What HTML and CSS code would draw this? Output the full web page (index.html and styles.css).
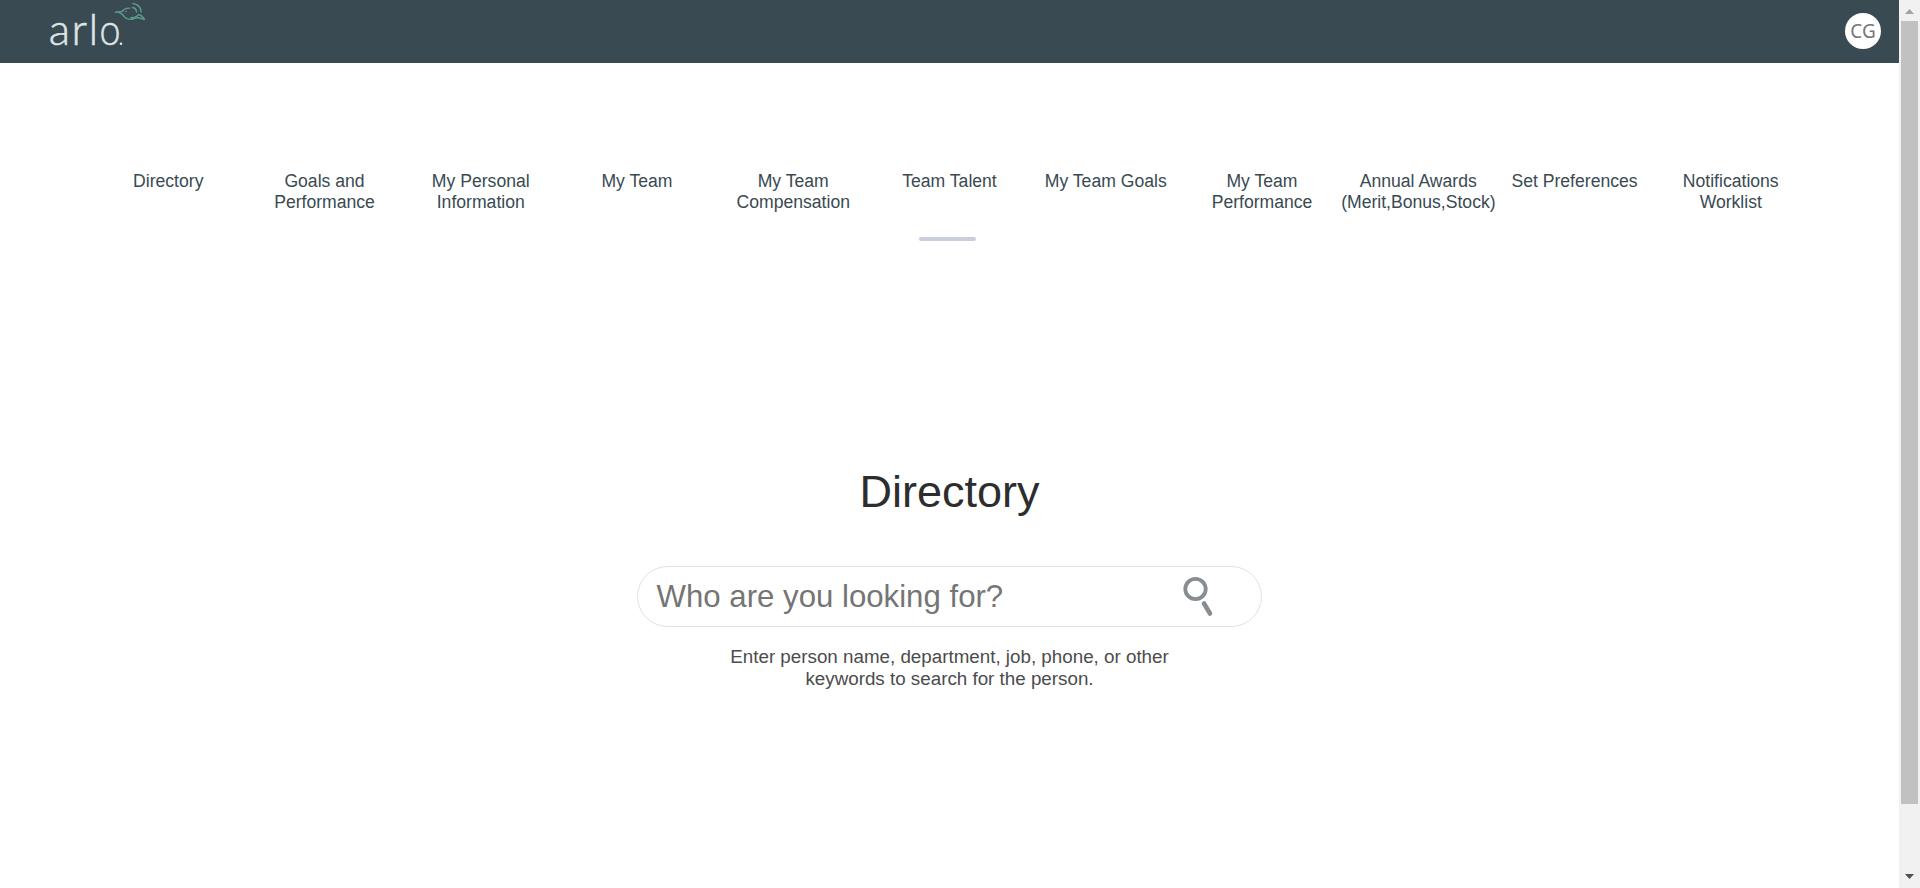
FILE: index.html
```html
<!DOCTYPE html>
<html lang="en">
<head>
<meta charset="utf-8">
<title>Directory</title>
<link rel="stylesheet" href="styles.css">
</head>
<body>
<div class="window">
  <div class="page">
    <header class="header">
      <svg class="logo" width="120" height="63" viewBox="30 0 120 63" role="img" aria-label="arlo">
        <text class="logo-text" y="45"><tspan x="48.800">a</tspan><tspan x="71.500">r</tspan><tspan x="88.500">l</tspan><tspan x="99.600" textLength="21" lengthAdjust="spacingAndGlyphs">o</tspan></text>
        <circle cx="121" cy="43.800" r="1.300" fill="#dfe4e6"/>
        <g fill="none" stroke="#5a9c89" stroke-width="1.400" stroke-linecap="round" stroke-linejoin="round">
          <path d="M115.500 12.200L122 11.500Q125 7.800 129.500 8.200"/>
          <path d="M119 12.500Q123 14 124 16.500Q128 21 134 18.500Q138 16.500 144.500 19.500"/>
          <path d="M144 18.500Q141.500 15 138.500 14.500Q136 18.500 131 17.500"/>
          <path d="M132.500 7.500Q136.500 8 136.500 12M133 3.500Q141 5 141 12"/>
          <path d="M126 11.500h.3"/>
        </g>
      </svg>
      <div class="avatar">CG</div>
    </header>
    <nav class="nav">
      <a class="nav-item">Directory</a>
      <a class="nav-item">Goals and Performance</a>
      <a class="nav-item">My Personal Information</a>
      <a class="nav-item">My Team</a>
      <a class="nav-item">My Team Compensation</a>
      <a class="nav-item">Team Talent</a>
      <a class="nav-item">My Team Goals</a>
      <a class="nav-item">My Team Performance</a>
      <a class="nav-item">Annual Awards (Merit,Bonus,Stock)</a>
      <a class="nav-item">Set Preferences</a>
      <a class="nav-item">Notifications Worklist</a>
    </nav>
    <div class="indicator"></div>
    <main class="directory">
      <h1 class="title">Directory</h1>
      <div class="search">
        <span class="placeholder">Who are you looking for?</span>
        <svg class="search-icon" width="32" height="42" viewBox="0 0 32 42">
          <circle cx="12.500" cy="13" r="10.200" fill="none" stroke="#878d91" stroke-width="3.800"/>
          <path d="M21 27.500L27 37.500" stroke="#878d91" stroke-width="4.600" stroke-linecap="round"/>
        </svg>
      </div>
      <p class="hint">Enter person name, department, job, phone, or other<br>keywords to search for the person.</p>
    </main>
  </div>
  <div class="scrollbar">
    <svg class="arrow" width="21" height="21"><path d="M6 14L10.500 9L15 14Z" fill="#a3a3a3"/></svg>
    <div class="thumb"></div>
    <svg class="arrow" width="21" height="21"><path d="M6 7L10.500 12L15 7Z" fill="#505050"/></svg>
  </div>
</div>
</body>
</html>
```
FILE: styles.css
```css
* { box-sizing: border-box; }
body { margin: 0; background: #fff; font-family: "Liberation Sans", Arial, sans-serif; }
.window { display: flex; height: 888px; overflow: hidden; }
.page { width: 1899px; }
.header { display: flex; justify-content: space-between; height: 63px; padding: 0 18px 0 30px; background: #394a52; }
.logo-text { font-family: Lato, sans-serif; font-weight: 300; font-size: 44px; fill: #dfe4e6; stroke: #dfe4e6; stroke-width: .5px; }
.avatar { width: 36px; height: 36px; margin-top: 13px; border-radius: 50%; background: #fff; color: #777; font: 19px/36px "Noto Sans", sans-serif; text-align: center; }
.nav { display: grid; grid-template-columns: repeat(11, 156.250px); justify-content: center; height: 173px; padding-top: 108px; font-size: 17.600px; line-height: 21px; color: #394a52; text-align: center; }
.nav-item { padding: 0 1px; }
.indicator { width: 57px; height: 4px; margin: 1px 0 0 919px; border-radius: 2px; background: #cacddc; }
.directory { display: flex; flex-direction: column; align-items: center; padding-top: 225px; }
.title { margin: 0; font-size: 45px; font-weight: 400; line-height: 52px; color: #2d2d2d; }
.search { display: flex; align-items: center; justify-content: space-between; width: 625px; height: 61px; margin-top: 48px; padding: 0 46.500px 0 18.500px; border: 1px solid #dde3e5; border-radius: 31px; }
.placeholder { font-size: 31.200px; line-height: 36px; color: #757575; }
.hint { margin: 19px 0 0; font-size: 18.790px; line-height: 22.300px; color: #4c4c4c; text-align: center; }
.scrollbar { display: flex; flex-direction: column; width: 21px; padding: 0 2px; background: #f1f1f1; }
.arrow { display: block; flex: none; margin-left: -2px; }
.thumb { width: 17px; height: 783px; margin-bottom: 63px; background: #c1c1c1; }
```
